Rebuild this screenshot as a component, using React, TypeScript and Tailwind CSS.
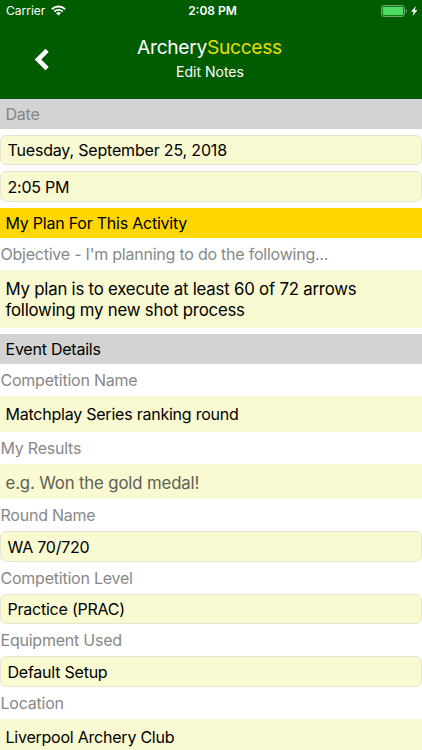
import { ReactNode } from 'react';

export default function App() {
  return (
    <div className="h-[750px] w-[422px] overflow-hidden bg-white font-['Inter',sans-serif] text-[16px] leading-5 tracking-[-0.23px] text-black">
      <header className="h-[98.5px] bg-[#005c00] text-white">
        <StatusBar />
        <div className="grid grid-cols-[84px_1fr_84px]">
          <button type="button" aria-label="Back" className="flex items-start justify-center pt-[27px]">
            <BackIcon />
          </button>
          <div className="pt-[13px] text-center">
            <h1 className="pr-[3px] text-[19.2px] leading-6 font-normal tracking-[-0.3px]">
              Archery<span className="text-[#e6de00]">Success</span>
            </h1>
            <p className="mt-px pr-0.5 text-[14px] leading-6 tracking-normal">Edit Notes</p>
          </div>
        </div>
      </header>

      <main>
        <SectionBar className="bg-[#d3d3d3] text-[#858585]">Date</SectionBar>
        <div className="flex flex-col gap-1.5 py-1.5">
          <Picker>
            <span className="tracking-[-0.18px]">Tuesday, September 25, 2018</span>
          </Picker>
          <Picker>2:05 PM</Picker>
        </div>

        <SectionBar className="bg-[#ffd700]">My Plan For This Activity</SectionBar>
        <Label>Objective - I&apos;m planning to do the following...</Label>
        <div className="mb-1.5 h-[57.5px] bg-[#f9f9d2] px-[5.5px] pt-[9px] text-[16.8px] leading-[20.5px] tracking-[-0.21px]">
          My plan is to execute at least 60 of 72 arrows
          <br />
          following my new shot process
        </div>

        <SectionBar className="bg-[#d3d3d3]">Event Details</SectionBar>
        <Label>Competition Name</Label>
        <TextField>Matchplay Series ranking round</TextField>
        <Label>My Results</Label>
        <TextField>
          <span className="pt-0.5 text-[16.8px] tracking-[-0.15px] text-[#5f5f55]">e.g. Won the gold medal!</span>
        </TextField>
        <Label>Round Name</Label>
        <Picker>WA 70/720</Picker>
        <Label>Competition Level</Label>
        <Picker>Practice (PRAC)</Picker>
        <Label>Equipment Used</Label>
        <Picker>Default Setup</Picker>
        <Label>Location</Label>
        <TextField>Liverpool Archery Club</TextField>
      </main>
    </div>
  );
}

function SectionBar({ className, children }: { className: string; children: ReactNode }) {
  return <h2 className={`flex h-[30.4px] items-center px-[5.5px] ${className}`}>{children}</h2>;
}

function Label({ children }: { children: ReactNode }) {
  return <div className="flex h-[31.97px] items-center px-[0.5px] text-[#888888]">{children}</div>;
}

function TextField({ children }: { children: ReactNode }) {
  return <div className="flex h-[35.7px] items-center bg-[#f9f9d2] px-[5.5px]">{children}</div>;
}

function Picker({ children }: { children: ReactNode }) {
  return (
    <div className="flex h-[30.5px] items-center rounded-[6px] border border-[#e6e6d0] bg-[#f9f9d2] px-[6.5px]">
      {children}
    </div>
  );
}

function StatusBar() {
  return (
    <div className="grid h-[22px] grid-cols-3 items-center pr-[5px] pl-1.5 text-[12px] leading-4 tracking-normal">
      <div className="flex items-center gap-1.5">
        <span>Carrier</span>
        <WifiIcon />
      </div>
      <span className="pl-0.5 text-center font-semibold">2:08 PM</span>
      <div className="flex items-center justify-end gap-[3.5px]">
        <BatteryIcon />
        <BoltIcon />
      </div>
    </div>
  );
}

function BackIcon() {
  return (
    <svg aria-hidden="true" className="h-[21px] w-[13.5px]" viewBox="410 26 1036 1612">
      <path
        d="M1427 301l-531 531 531 531q19 19 19 45t-19 45l-166 166q-19 19-45 19t-45-19l-742-742q-19-19-19-45t19-45l742-742q19-19 45-19t45 19l166 166q19 19 19 45t-19 45z"
        fill="currentColor"
      />
    </svg>
  );
}

function WifiIcon() {
  return (
    <svg aria-hidden="true" className="mb-px h-[11px] w-[15px]" viewBox="0 0 15 11" fill="none">
      <path d="M.9 4.2a9.4 9.4 0 0 1 13.2 0" stroke="currentColor" strokeWidth="1.9" />
      <path d="M3.3 6.6a6 6 0 0 1 8.4 0" stroke="currentColor" strokeWidth="1.8" />
      <path d="M7.5 10.6 5.1 8.2a3.5 3.5 0 0 1 4.8 0Z" fill="currentColor" />
    </svg>
  );
}

function BatteryIcon() {
  return (
    <svg aria-hidden="true" className="mb-px h-3 w-[26px]" viewBox="0 0 26 12" fill="none">
      <rect x=".5" y=".5" width="23" height="11" rx="2.4" stroke="#6fa56f" />
      <rect x="1.7" y="1.8" width="20.6" height="8.400" rx="1" fill="#4cd964" />
      <path d="M24.8 4v4c.7-.3 1.2-1.1 1.2-2s-.5-1.7-1.2-2Z" fill="#6fa56f" />
    </svg>
  );
}

function BoltIcon() {
  return (
    <svg aria-hidden="true" className="mb-px h-[10px] w-[6.500px]" viewBox="0 0 6.500 10">
      <path d="M4.900 0 0 5.800h2.700L1.500 10l5-5.900H3.800Z" fill="currentColor" />
    </svg>
  );
}
